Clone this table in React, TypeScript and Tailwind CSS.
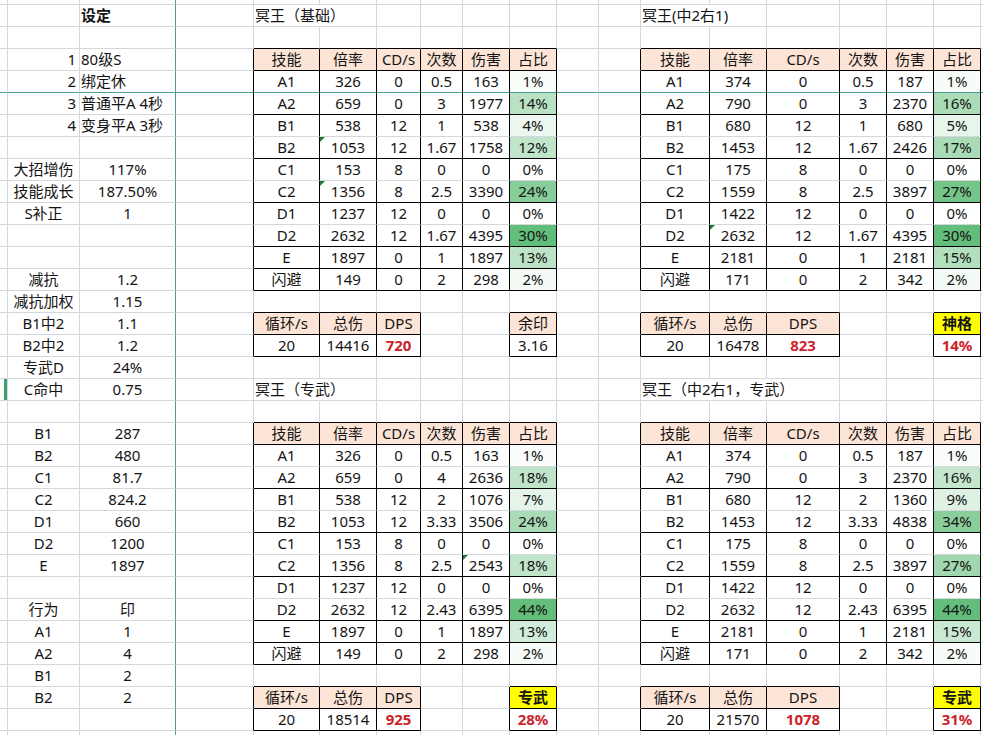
import clsx from "clsx";

type Align = "l" | "c" | "r";

interface Cell {
  text?: string;
  align?: Align;
  bold?: boolean;
  red?: boolean;
  fill?: "hdr" | "yel";
  scale?: number;
  tri?: boolean;
  open?: boolean; // text runs into next cell, hide gridline
  mark?: boolean;
}

interface Box {
  r0: number;
  r1: number;
  c0: number;
  c1: number;
  ends: number[];
}

// column widths incl. 1px right gridline
const COL_W = [8, 72, 96, 78, 66, 57, 44, 42, 47, 47, 42, 42, 69, 57, 73, 47, 47, 47, 60];
const ROWS = 34;

const cells = new Map<string, Cell>();
const boxes: Box[] = [];
const put = (r: number, c: number, cell: Cell) => cells.set(`${r},${c}`, cell);

// ---- left settings ----
put(0, 2, { text: "设定", bold: true, align: "l" });
["80级S", "绑定休", "普通平A 4秒", "变身平A 3秒"].forEach((t, i) => {
  put(2 + i, 1, { text: String(i + 1), align: "r" });
  put(2 + i, 2, { text: t, align: "l" });
});
const pairs: [number, string, string][] = [
  [7, "大招增伤", "117%"],
  [8, "技能成长", "187.50%"],
  [9, "S补正", "1"],
  [12, "减抗", "1.2"],
  [13, "减抗加权", "1.15"],
  [14, "B1中2", "1.1"],
  [15, "B2中2", "1.2"],
  [16, "专武D", "24%"],
  [17, "C命中", "0.75"],
  [19, "B1", "287"],
  [20, "B2", "480"],
  [21, "C1", "81.7"],
  [22, "C2", "824.2"],
  [23, "D1", "660"],
  [24, "D2", "1200"],
  [25, "E", "1897"],
  [27, "行为", "印"],
  [28, "A1", "1"],
  [29, "A2", "4"],
  [30, "B1", "2"],
  [31, "B2", "2"],
];
pairs.forEach(([r, a, b]) => {
  put(r, 1, { text: a, align: "c" });
  put(r, 2, { text: b, align: "c" });
});
put(17, 0, { mark: true });

// ---- skill tables ----
type SkillRow = [string, string, string, string, number, string];

function addTable(r0: number, c0: number, rows: SkillRow[], tris: [number, number][]) {
  ["技能", "倍率", "CD/s", "次数", "伤害", "占比"].forEach((h, i) => put(r0, c0 + i, { text: h, fill: "hdr" }));
  const max = Math.max(...rows.map((x) => x[4]));
  rows.forEach((row, i) => {
    const r = r0 + 1 + i;
    put(r, c0, { text: row[0] });
    put(r, c0 + 1, { text: row[1] });
    put(r, c0 + 2, { text: row[2] });
    put(r, c0 + 3, { text: row[3] });
    put(r, c0 + 4, { text: String(row[4]) });
    put(r, c0 + 5, { text: row[5], scale: row[4] / max });
  });
  tris.forEach(([i, off]) => {
    const key = `${r0 + 1 + i},${c0 + off}`;
    cells.set(key, { ...cells.get(key), tri: true });
  });
  boxes.push({ r0, r1: r0 + 10, c0, c1: c0 + 5, ends: [0, 2, 4, 6, 8, 9, 10] });
}

function addSummary(r0: number, c0: number, total: string, dps: string, tag: string, val: string, yellow: boolean) {
  ["循环/s", "总伤", "DPS"].forEach((h, i) => put(r0, c0 + i, { text: h, fill: "hdr" }));
  put(r0 + 1, c0, { text: "20" });
  put(r0 + 1, c0 + 1, { text: total });
  put(r0 + 1, c0 + 2, { text: dps, bold: true, red: true });
  boxes.push({ r0, r1: r0 + 1, c0, c1: c0 + 2, ends: [0, 1] });
  const tc = c0 + 5;
  put(r0, tc, { text: tag, fill: yellow ? "yel" : "hdr", bold: yellow });
  put(r0 + 1, tc, { text: val, bold: yellow, red: yellow });
  boxes.push({ r0, r1: r0 + 1, c0: tc, c1: tc, ends: [0, 1] });
}

put(0, 4, { text: "冥王（基础）", align: "l", open: true });
put(0, 12, { text: "冥王(中2右1)", align: "l", open: true });
put(17, 4, { text: "冥王（专武）", align: "l", open: true });
put(17, 12, { text: "冥王（中2右1，专武）", align: "l", open: true });
put(17, 13, { open: true });

addTable(
  2,
  4,
  [
    ["A1", "326", "0", "0.5", 163, "1%"],
    ["A2", "659", "0", "3", 1977, "14%"],
    ["B1", "538", "12", "1", 538, "4%"],
    ["B2", "1053", "12", "1.67", 1758, "12%"],
    ["C1", "153", "8", "0", 0, "0%"],
    ["C2", "1356", "8", "2.5", 3390, "24%"],
    ["D1", "1237", "12", "0", 0, "0%"],
    ["D2", "2632", "12", "1.67", 4395, "30%"],
    ["E", "1897", "0", "1", 1897, "13%"],
    ["闪避", "149", "0", "2", 298, "2%"],
  ],
  [
    [3, 1],
    [5, 1],
  ]
);
addTable(
  2,
  12,
  [
    ["A1", "374", "0", "0.5", 187, "1%"],
    ["A2", "790", "0", "3", 2370, "16%"],
    ["B1", "680", "12", "1", 680, "5%"],
    ["B2", "1453", "12", "1.67", 2426, "17%"],
    ["C1", "175", "8", "0", 0, "0%"],
    ["C2", "1559", "8", "2.5", 3897, "27%"],
    ["D1", "1422", "12", "0", 0, "0%"],
    ["D2", "2632", "12", "1.67", 4395, "30%"],
    ["E", "2181", "0", "1", 2181, "15%"],
    ["闪避", "171", "0", "2", 342, "2%"],
  ],
  [[7, 1]]
);
addTable(
  19,
  4,
  [
    ["A1", "326", "0", "0.5", 163, "1%"],
    ["A2", "659", "0", "4", 2636, "18%"],
    ["B1", "538", "12", "2", 1076, "7%"],
    ["B2", "1053", "12", "3.33", 3506, "24%"],
    ["C1", "153", "8", "0", 0, "0%"],
    ["C2", "1356", "8", "2.5", 2543, "18%"],
    ["D1", "1237", "12", "0", 0, "0%"],
    ["D2", "2632", "12", "2.43", 6395, "44%"],
    ["E", "1897", "0", "1", 1897, "13%"],
    ["闪避", "149", "0", "2", 298, "2%"],
  ],
  [[5, 4]]
);
addTable(
  19,
  12,
  [
    ["A1", "374", "0", "0.5", 187, "1%"],
    ["A2", "790", "0", "3", 2370, "16%"],
    ["B1", "680", "12", "2", 1360, "9%"],
    ["B2", "1453", "12", "3.33", 4838, "34%"],
    ["C1", "175", "8", "0", 0, "0%"],
    ["C2", "1559", "8", "2.5", 3897, "27%"],
    ["D1", "1422", "12", "0", 0, "0%"],
    ["D2", "2632", "12", "2.43", 6395, "44%"],
    ["E", "2181", "0", "1", 2181, "15%"],
    ["闪避", "171", "0", "2", 342, "2%"],
  ],
  []
);

addSummary(14, 4, "14416", "720", "余印", "3.16", false);
addSummary(14, 12, "16478", "823", "神格", "14%", true);
addSummary(31, 4, "18514", "925", "专武", "28%", true);
addSummary(31, 12, "21570", "1078", "专武", "31%", true);

const boxAt = (r: number, c: number) => boxes.find((b) => r >= b.r0 && r <= b.r1 && c >= b.c0 && c <= b.c1);

function scaleColor(t: number) {
  const r = Math.round(255 - 156 * t);
  const g = Math.round(255 - 65 * t);
  const b = Math.round(255 - 132 * t);
  return `rgb(${r}, ${g}, ${b})`;
}

function GridCell({ r, c }: { r: number; c: number }) {
  const cell = r >= 0 ? cells.get(`${r},${c}`) : undefined;
  const here = boxAt(r, c);
  const right = boxAt(r, c + 1);
  const below = boxAt(r + 1, c);

  let rightCls = "border-r-[#d4d8dc]";
  if (here || right) rightCls = "border-r-black";
  else if (cell?.open) rightCls = "border-r-transparent";
  if (c === 2) rightCls = "border-r-[#4a9d92]";

  let bottomCls = "border-b-[#d4d8dc]";
  if ((here && !below) || (!here && below)) bottomCls = "border-b-black";
  else if (here && below && here === below && here.ends.includes(r - here.r0)) bottomCls = "border-b-black";
  if (r === 3) bottomCls = "border-b-[#4a9d92]";

  const align = cell?.align ?? "c";

  return (
    <div
      className={clsx(
        "relative flex items-center whitespace-nowrap border-r border-b",
        r < 0 ? "h-[5px]" : "h-[22px]",
        rightCls,
        bottomCls,
        align === "l" && "justify-start pl-[1px]",
        align === "c" && "justify-center",
        align === "r" && "justify-end pr-[3px]",
        cell?.fill === "hdr" && "bg-[#fce4d6]",
        cell?.fill === "yel" && "bg-[#ffff00]",
        cell?.bold && "font-bold",
        cell?.red ? "text-[#cc2229]" : "text-[#141414]"
      )}
      style={cell?.scale !== undefined ? { backgroundColor: scaleColor(cell.scale) } : undefined}
    >
      {cell?.text}
      {cell?.tri && (
        <span className="absolute left-0 top-0 h-0 w-0 border-t-[5px] border-r-[5px] border-t-[#1f7a3a] border-r-transparent" />
      )}
      {cell?.mark && <span className="absolute right-0 top-0 bottom-0 w-[3px] bg-[#3aa36a]" />}
    </div>
  );
}

export default function App() {
  const rows = Array.from({ length: ROWS + 1 }, (_, i) => i - 1);
  return (
    <div className="w-[983px] h-[735px] overflow-hidden bg-white font-['Noto_Sans','Noto_Sans_CJK_SC',sans-serif] text-[15px] leading-none">
      <div className="grid w-max grid-cols-[8px_72px_96px_78px_66px_57px_44px_42px_47px_47px_42px_42px_69px_57px_73px_47px_47px_47px_60px]">
        {rows.map((r) => COL_W.map((_, c) => <GridCell key={`${r}-${c}`} r={r} c={c} />))}
      </div>
    </div>
  );
}
